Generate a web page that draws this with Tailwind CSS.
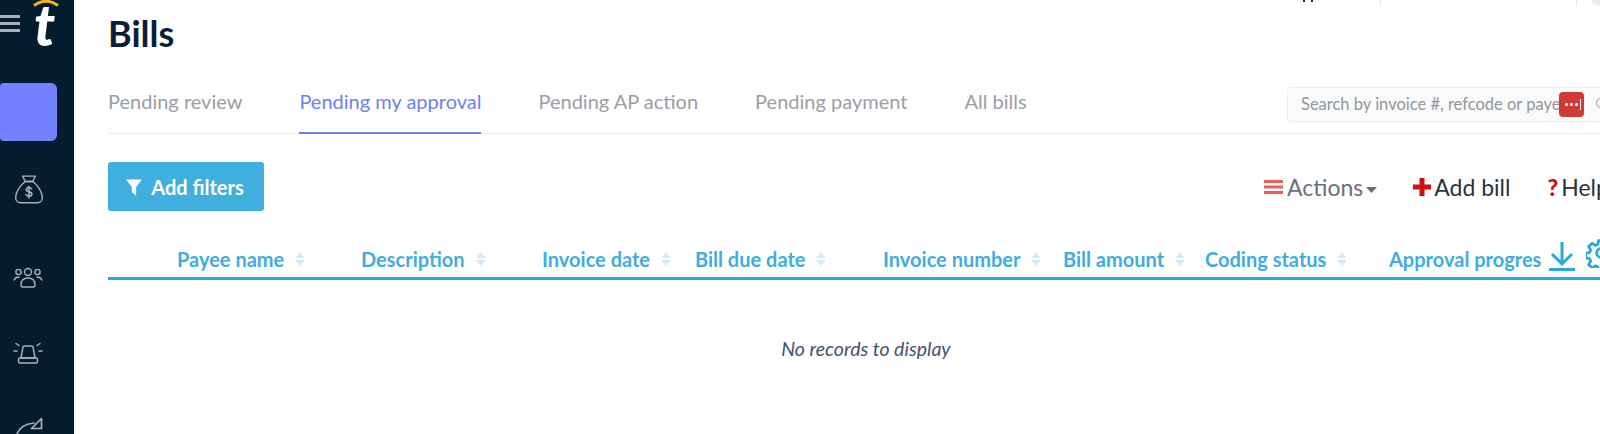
<!DOCTYPE html>
<html lang="en">
<head>
    <meta charset="UTF-8">
    <title>Bills</title>
    <script src="https://cdn.jsdelivr.net/npm/@tailwindcss/browser@4"></script>
</head>
<body class="w-[1600px] h-[434px] overflow-hidden bg-white flex font-['Lato','Open_Sans',sans-serif]">

    <!-- Sidebar -->
    <aside class="w-[74px] h-full shrink-0 bg-[#051c2e] flex flex-col overflow-hidden">
        <div class="h-[83px] shrink-0 relative">
            <div class="absolute left-0 top-[15px] w-5 flex flex-col gap-[4px]">
                <div class="h-[3px] bg-[#a9aebd]"></div>
                <div class="h-[3px] bg-[#a9aebd]"></div>
                <div class="h-[3px] bg-[#a9aebd]"></div>
            </div>
            <svg class="absolute left-[33px] top-0" width="26" height="7" viewBox="0 0 26 7"><path d="M1 5.500 Q13 -3 25 5.500" fill="none" stroke="#f5b50f" stroke-width="3"/></svg>
            <span class="absolute left-[34px] top-0 text-[57px] leading-[49px] font-black italic text-white">t</span>
        </div>
        <div class="w-[57px] h-[58px] shrink-0 rounded-r-md rounded-l-sm bg-[#7381ff]"></div>

        <div class="flex flex-col items-start pl-[13px] mt-[33px] text-[#aab0b8]">
            <svg class="shrink-0" width="32" height="32" viewBox="0 0 30 30" fill="none" stroke="currentColor" stroke-width="1.300" stroke-linejoin="round" stroke-linecap="round">
                <path d="M9 2h12l-2.500 5h-7z"/>
                <path d="M11.500 7h7c4 3 9 9 9 15 0 3-2 5-4.500 5H7c-2.500 0-4.500-2-4.500-5 0-6 5-12 9-15z"/>
                <path d="M17.500 14c-.6-1-1.500-1.300-2.500-1.300-1.500 0-2.600.8-2.600 2 0 2.800 5.300 1.300 5.300 4 0 1.300-1.200 2-2.700 2-1.200 0-2.200-.5-2.800-1.400M15 11.500v11" stroke-width="1.500"/>
            </svg>
            <svg class="shrink-0 mt-[60px]" width="30" height="22" viewBox="0 0 30 22" fill="none" stroke="currentColor" stroke-width="1.400" stroke-linecap="round">
                <circle cx="15" cy="6" r="3.500"/><circle cx="5.500" cy="6" r="2.600"/><circle cx="24.500" cy="6" r="2.600"/>
                <path d="M8 19c0-4 2-7 7-7s7 3 7 7c0 1-1 2-2 2H10c-1 0-2-1-2-2zM1 14c1-2 3-3 5-3M29 14c-1-2-3-3-5-3"/>
            </svg>
            <svg class="shrink-0 mt-[54px]" width="30" height="24" viewBox="0 0 30 24" fill="none" stroke="currentColor" stroke-width="1.400" stroke-linecap="round" stroke-linejoin="round">
                <path d="M8 16l2-11c.2-.7.600-1 1.200-1h7.600c.6 0 1 .3 1.200 1l2 11z"/>
                <rect x="5.500" y="16" width="19" height="5" rx="1.500"/>
                <path d="M1 9h3M26 9h3M3 1.500l3 2M27 1.500l-3 2"/>
            </svg>
            <svg class="shrink-0 mt-[51px]" width="30" height="26" viewBox="0 0 30 26" fill="none" stroke="currentColor" stroke-width="1.700" stroke-linejoin="round" stroke-linecap="round">
                <path d="M2 25C3 13 10 7 21 6"/>
                <path d="M28.500 1.500v10h-10z"/>
            </svg>
        </div>
    </aside>

    <!-- Main -->
    <main class="flex-1 min-w-0 relative pl-[34px] overflow-hidden">
        <!-- clipped bits of the top bar -->
        <div class="absolute left-[1229px] top-0 w-[2px] h-[2px] bg-[#1d2b44]"></div>
        <div class="absolute left-[1237px] top-0 w-[2px] h-[2px] bg-[#1d2b44]"></div>
        <div class="absolute left-[1306px] top-0 w-px h-[6px] bg-gray-200"></div>
        <div class="absolute left-[1502px] top-0 w-px h-[6px] bg-gray-200"></div>
        <div class="absolute left-[1516px] top-[-14px] w-6 h-5 rounded-full bg-[#e8ecfa]"></div>

        <h1 class="text-[36px] leading-[40px] font-bold text-[#0b1e33] mt-[13px]">Bills</h1>

        <!-- Tabs -->
        <div class="flex items-stretch h-[81px] w-[1520px] border-b border-[#eceef1] text-[20px] text-[#9b9ea6]">
            <div class="w-[1179px] flex gap-[57px] pt-[33px]">
                <a>Pending review</a>
                <a class="h-[48px] text-[#6d80f2] border-b-2 border-[#6d80f2]">Pending my approval</a>
                <a>Pending AP action</a>
                <a>Pending payment</a>
                <a>All bills</a>
            </div>
            <div class="relative w-[340px] h-[35px] mt-[34px] px-[13px] rounded-[4px] border border-[#eceef0] bg-[#fafafa] flex items-center text-[16.500px] text-[#8f979e] whitespace-nowrap overflow-hidden">
                Search by invoice #, refcode or payee...
                <svg class="absolute left-[307px] top-[9px]" width="14" height="14" viewBox="0 0 14 14" fill="none" stroke="#b3b8bd" stroke-width="1.500"><circle cx="6" cy="6" r="4.500"/><path d="M9.500 9.500L13 13"/></svg>
            </div>
        </div>
        <div class="absolute left-[1485px] top-[92px] w-[25px] h-[25px] rounded-[4px] bg-[#cf3a36] flex items-center justify-center gap-[2px]">
            <span class="w-[3px] h-[3px] rounded-full bg-white"></span>
            <span class="w-[3px] h-[3px] rounded-full bg-white"></span>
            <span class="w-[3px] h-[3px] rounded-full bg-white"></span>
            <span class="absolute left-[21px] top-[7px] w-px h-[11px] bg-white"></span>
        </div>

        <!-- Toolbar -->
        <div class="flex items-center justify-between w-[1520px] mt-[28px] h-[49px]">
            <button class="h-[49px] w-[156px] pr-[3px] rounded-[3px] bg-[#40afde] text-white text-[20px] font-bold flex items-center justify-center gap-[8px]">
                <svg width="18" height="18" viewBox="0 0 17 17" fill="white"><path d="M1 1.500h15L10.500 8.500v8l-4-3v-5z"/></svg>
                Add filters
            </button>
            <div class="flex items-center shrink-0 text-[23px] text-[#2c3240] mt-[1px] mr-[-24px] w-[388px] whitespace-nowrap overflow-hidden">
                <svg class="shrink-0 mr-[4px]" width="19" height="16" viewBox="0 0 19 16" fill="#ea5f55"><rect y="1" width="19" height="3"/><rect y="6.500" width="19" height="3"/><rect y="12" width="19" height="3"/></svg>
                <span class="text-[#6b6f78]">Actions</span>
                <svg class="shrink-0 ml-[3px] mt-[6px]" width="11" height="6" viewBox="0 0 11 6" fill="#6b6f78"><path d="M0 0h11L5.500 6z"/></svg>
                <svg class="shrink-0 ml-[36px] mr-[3px]" width="18" height="18" viewBox="0 0 18 18" fill="#d01010"><path d="M6.500 0h5v6.500H18v5h-6.500V18h-5v-6.500H0v-5h6.500z"/></svg>
                <span>Add bill</span>
                <span class="ml-[37px] mr-[3px] font-black text-[#d01010]">?</span>
                <span>Help</span>
            </div>
        </div>

        <!-- Table header -->
        <div class="flex items-center w-[1520px] h-[69px] pt-[30px] border-b-[3px] border-[#2aa9dd] text-[20px] font-bold text-[#3fade0] whitespace-nowrap">
            <div class="w-[69px]"></div>
            <div class="w-[184px] flex items-center gap-[11px]">Payee name <svg width="10" height="14" viewBox="0 0 10 14" fill="#d3ebf8"><path d="M5 0l5 6H0zM5 14L0 8h10z"/></svg></div>
            <div class="w-[181px] flex items-center gap-[11px]">Description <svg width="10" height="14" viewBox="0 0 10 14" fill="#d3ebf8"><path d="M5 0l5 6H0zM5 14L0 8h10z"/></svg></div>
            <div class="w-[153px] flex items-center gap-[11px]">Invoice date <svg width="10" height="14" viewBox="0 0 10 14" fill="#d3ebf8"><path d="M5 0l5 6H0zM5 14L0 8h10z"/></svg></div>
            <div class="w-[188px] flex items-center gap-[11px]">Bill due date <svg width="10" height="14" viewBox="0 0 10 14" fill="#d3ebf8"><path d="M5 0l5 6H0zM5 14L0 8h10z"/></svg></div>
            <div class="w-[180px] flex items-center gap-[11px]">Invoice number <svg width="10" height="14" viewBox="0 0 10 14" fill="#d3ebf8"><path d="M5 0l5 6H0zM5 14L0 8h10z"/></svg></div>
            <div class="w-[142px] flex items-center gap-[11px]">Bill amount <svg width="10" height="14" viewBox="0 0 10 14" fill="#d3ebf8"><path d="M5 0l5 6H0zM5 14L0 8h10z"/></svg></div>
            <div class="w-[184px] flex items-center gap-[11px]">Coding status <svg width="10" height="14" viewBox="0 0 10 14" fill="#d3ebf8"><path d="M5 0l5 6H0zM5 14L0 8h10z"/></svg></div>
            <div class="w-[155px] overflow-hidden">Approval progres</div>
            <svg class="shrink-0 ml-[5px] mt-[-6px]" width="26" height="30" viewBox="0 0 26 30" fill="none" stroke="#2aa9dd" stroke-width="3"><path d="M13 1v21M3 13l10 10 10-10M0 28.500h26"/></svg>
            <svg class="shrink-0 ml-[11px] mt-[-12px]" width="30" height="30" viewBox="0 0 24 24" fill="none" stroke="#2aa9dd" stroke-width="2.200"><circle cx="12" cy="12" r="3.500"/><path d="M10 2h4l.5 3 2 .9 2.600-1.700 2.800 2.800-1.700 2.600.9 2 3 .5v4l-3 .5-.9 2 1.700 2.600-2.800 2.800-2.600-1.700-2 .9-.5 3h-4l-.5-3-2-.9-2.600 1.700-2.800-2.800 1.700-2.600-.9-2-3-.5v-4l3-.5.9-2-1.700-2.600 2.800-2.800 2.600 1.700 2-.9z"/></svg>
        </div>

        <!-- Empty state -->
        <p class="w-[1516px] text-center mt-[54px] text-[19.500px] italic text-[#46526e]">No records to display</p>
    </main>
</body>
</html>
